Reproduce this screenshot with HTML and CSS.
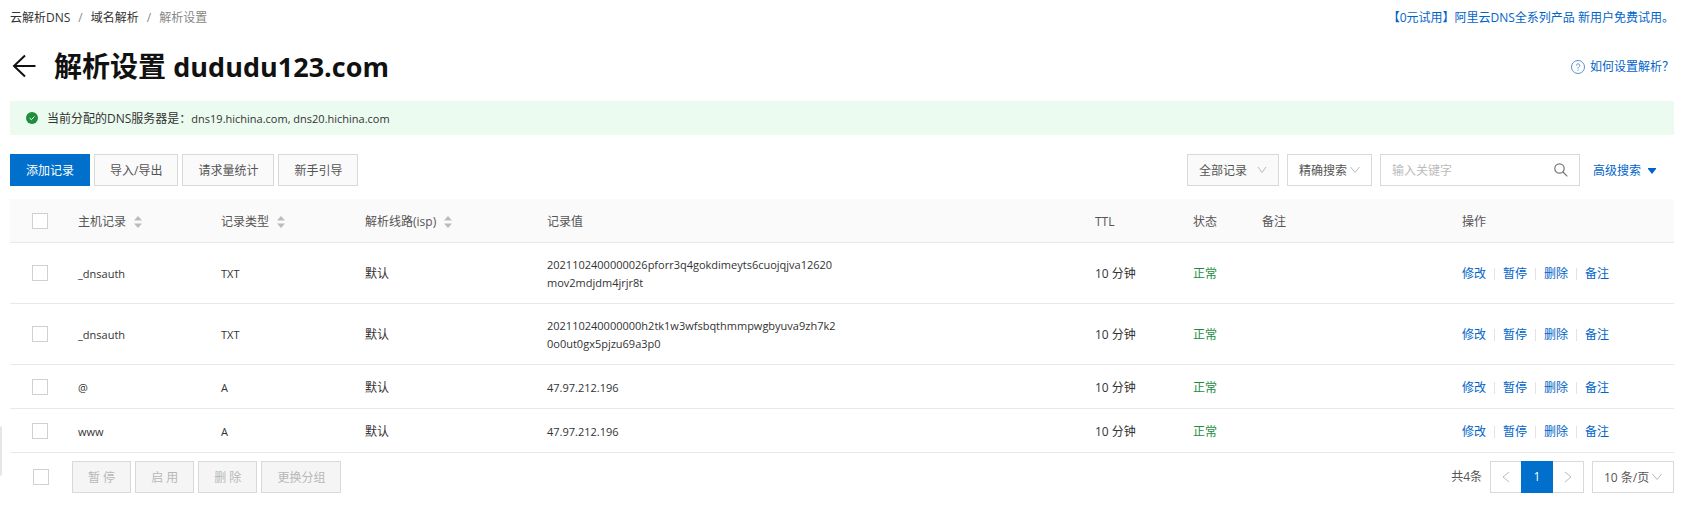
FILE: index.html
```html
<!DOCTYPE html>
<html lang="zh-CN">
<head>
    <meta charset="UTF-8">
    <meta name="viewport" content="width=device-width, initial-scale=1.0">
    <title>解析设置 dududu123.com</title>
    <link rel="stylesheet" href="styles.css">
</head>
<body>
    <button class="side-handle" type="button" aria-label="展开侧栏"></button>

    <div class="top-bar">
        <nav class="breadcrumb">
            <a href="#">云解析DNS</a>
            <span class="sep">/</span>
            <a href="#">域名解析</a>
            <span class="sep">/</span>
            <span class="current">解析设置</span>
        </nav>
        <a class="promo" href="#">【0元试用】阿里云DNS全系列产品 新用户免费试用。</a>
    </div>

    <header class="page-header">
        <a class="back" href="#" aria-label="返回">
            <svg width="24" height="24" viewBox="0 0 24 24" fill="none" stroke="#111" stroke-width="2"><path d="M23.500 12H2M13 1.500L2 12l11 10.500"/></svg>
        </a>
        <h1>解析设置 <span class="domain">dududu123.com</span></h1>
        <a class="help" href="#">
            <svg width="14" height="14" viewBox="0 0 14 14" fill="none" stroke="#5a8fc9"><circle cx="7" cy="7" r="6.500"/><path d="M5.300 5.600c0-2.300 3.500-2.300 3.500-.1C8.800 6.900 7 6.900 7 8.500M7 9.600v1.200"/></svg>
            如何设置解析？
        </a>
    </header>

    <div class="alert">
        <svg width="12" height="12" viewBox="0 0 12 12"><circle cx="6" cy="6" r="6" fill="#1e8e3e"/><path d="M3.600 6l1.800 1.700 3-3.200" fill="none" stroke="#fff"/></svg>
        <p>当前分配的DNS服务器是：<span class="latin">dns19.hichina.com, dns20.hichina.com</span></p>
    </div>

    <div class="toolbar">
        <button class="btn primary" type="button">添加记录</button>
        <button class="btn" type="button">导入/导出</button>
        <button class="btn" type="button">请求量统计</button>
        <button class="btn" type="button">新手引导</button>
        <div class="filters">
            <div class="select filter-type">
                <select aria-label="记录范围"><option>全部记录</option></select>
                <svg width="10" height="8" viewBox="0 0 10 8"><path d="M1 1l4 5.500L9 1"/></svg>
            </div>
            <div class="select filter-match">
                <select aria-label="搜索方式"><option>精确搜索</option></select>
                <svg width="10" height="8" viewBox="0 0 10 8"><path d="M.500 1L5 6.500 9.500 1"/></svg>
            </div>
            <div class="search">
                <input type="text" placeholder="输入关键字" aria-label="输入关键字">
                <button type="button" aria-label="搜索">
                    <svg width="14" height="14" viewBox="0 0 14 14" fill="none" stroke="#777" stroke-width="1.200"><circle cx="5.500" cy="5.500" r="4.700"/><path d="M9 9l4.300 4.300"/></svg>
                </button>
            </div>
            <a class="advanced" href="#">高级搜索
                <svg width="8" height="6" viewBox="0 0 8 6"><path d="M0 0h8v1L4 6 0 1z" fill="#0064c8"/></svg>
            </a>
        </div>
    </div>

    <table class="records">
        <colgroup>
            <col class="c-check">
            <col class="c-host">
            <col class="c-type">
            <col class="c-line">
            <col class="c-value">
            <col class="c-ttl">
            <col class="c-status">
            <col class="c-remark">
            <col class="c-actions">
        </colgroup>
        <thead>
            <tr>
                <th class="check"><input type="checkbox" aria-label="全选"></th>
                <th>主机记录 <svg class="sort" width="8" height="12" viewBox="0 0 8 12"><path d="M4 0l4 4.500H0zM4 12l4-4.500H0z"/></svg></th>
                <th>记录类型 <svg class="sort" width="8" height="12" viewBox="0 0 8 12"><path d="M4 0l4 4.500H0zM4 12l4-4.500H0z"/></svg></th>
                <th>解析线路(isp) <svg class="sort" width="8" height="12" viewBox="0 0 8 12"><path d="M4 0l4 4.500H0zM4 12l4-4.500H0z"/></svg></th>
                <th>记录值</th>
                <th>TTL</th>
                <th>状态</th>
                <th>备注</th>
                <th>操作</th>
            </tr>
        </thead>
        <tbody>
            <tr>
                <td class="check"><input type="checkbox" aria-label="选择 _dnsauth"></td>
                <td class="latin">_dnsauth</td>
                <td class="latin">TXT</td>
                <td>默认</td>
                <td class="latin"><div class="value">2021102400000026pforr3q4gokdimeyts6cuojqjva12620<wbr>mov2mdjdm4jrjr8t</div></td>
                <td>10 分钟</td>
                <td class="ok">正常</td>
                <td></td>
                <td><div class="actions"><a href="#">修改</a><a href="#">暂停</a><a href="#">删除</a><a href="#">备注</a></div></td>
            </tr>
            <tr>
                <td class="check"><input type="checkbox" aria-label="选择 _dnsauth"></td>
                <td class="latin">_dnsauth</td>
                <td class="latin">TXT</td>
                <td>默认</td>
                <td class="latin"><div class="value">202110240000000h2tk1w3wfsbqthmmpwgbyuva9zh7k2<wbr>0o0ut0gx5pjzu69a3p0</div></td>
                <td>10 分钟</td>
                <td class="ok">正常</td>
                <td></td>
                <td><div class="actions"><a href="#">修改</a><a href="#">暂停</a><a href="#">删除</a><a href="#">备注</a></div></td>
            </tr>
            <tr>
                <td class="check"><input type="checkbox" aria-label="选择 @"></td>
                <td class="latin">@</td>
                <td class="latin">A</td>
                <td>默认</td>
                <td class="latin"><div class="value">47.97.212.196</div></td>
                <td>10 分钟</td>
                <td class="ok">正常</td>
                <td></td>
                <td><div class="actions"><a href="#">修改</a><a href="#">暂停</a><a href="#">删除</a><a href="#">备注</a></div></td>
            </tr>
            <tr>
                <td class="check"><input type="checkbox" aria-label="选择 www"></td>
                <td class="latin">www</td>
                <td class="latin">A</td>
                <td>默认</td>
                <td class="latin"><div class="value">47.97.212.196</div></td>
                <td>10 分钟</td>
                <td class="ok">正常</td>
                <td></td>
                <td><div class="actions"><a href="#">修改</a><a href="#">暂停</a><a href="#">删除</a><a href="#">备注</a></div></td>
            </tr>
        </tbody>
    </table>

    <footer class="table-footer">
        <input type="checkbox" aria-label="全选">
        <button class="btn" type="button" disabled>暂 停</button>
        <button class="btn" type="button" disabled>启 用</button>
        <button class="btn" type="button" disabled>删 除</button>
        <button class="btn" type="button" disabled>更换分组</button>
        <div class="pagination">
            <span class="total">共4条</span>
            <div class="pages">
                <button type="button" aria-label="上一页"><svg width="8" height="12" viewBox="0 0 8 12"><path d="M7 1L1 6l6 5"/></svg></button>
                <button class="active" type="button">1</button>
                <button type="button" aria-label="下一页"><svg width="8" height="12" viewBox="0 0 8 12"><path d="M1 1l6 5-6 5"/></svg></button>
            </div>
            <div class="select page-size">
                <select aria-label="每页条数"><option>10 条/页</option></select>
                <svg width="10" height="8" viewBox="0 0 10 8"><path d="M.500 1L5 6.500 9.500 1"/></svg>
            </div>
        </div>
    </footer>
</body>
</html>
```

FILE: styles.css
```css
* {
    box-sizing: border-box;
}
body {
    margin: 0;
    padding: 9px 9px 0 10px;
    font-family: "Open Sans", "Noto Sans CJK SC", sans-serif;
    font-size: 12px;
    line-height: 18px;
    color: #333;
    background-color: #fff;
}
a {
    color: #0064c8;
    text-decoration: none;
}
button, input, select {
    font: inherit;
    color: inherit;
    margin: 0;
}
svg {
    display: block;
    flex: none;
}
.latin {
    font-size: 11px;
}
.side-handle {
    position: absolute;
    left: 0;
    top: 426px;
    width: 2px;
    height: 50px;
    padding: 0;
    border: 0;
    border-radius: 0 2px 2px 0;
    background-color: #e6e6e6;
}

/* top */
.top-bar {
    display: flex;
    justify-content: space-between;
    height: 20px;
}
.breadcrumb {
    display: flex;
    gap: 8px;
}
.breadcrumb a {
    color: #333;
}
.breadcrumb .sep, .breadcrumb .current {
    color: #888;
}
.page-header {
    display: flex;
    align-items: center;
    height: 40px;
    margin-top: 17px;
}
h1 {
    margin: 0 0 0 18px;
    font-size: 28px;
    line-height: 40px;
    font-weight: bold;
    color: #111;
}
.domain {
    font-size: 27px;
}
.back {
    padding-left: 2px;
}
.help {
    display: flex;
    align-items: center;
    gap: 5px;
    margin-left: auto;
    padding-top: 2px;
}
.alert {
    display: flex;
    align-items: center;
    gap: 9px;
    height: 34px;
    margin-top: 15px;
    padding: 0 16px;
    background-color: #ebfbf0;
}
.alert p {
    margin: 0;
    padding-top: 2px;
}

/* toolbar */
.toolbar {
    display: flex;
    gap: 4px;
    margin-top: 19px;
}
.btn {
    height: 32px;
    padding: 2px 15px 0;
    border: 1px solid #d9d9d9;
    background-color: #fafafa;
    color: #555;
}
.btn.primary {
    border-color: #0070cc;
    background-color: #0070cc;
    color: #fff;
}
.btn:disabled {
    background-color: #f5f5f5;
    color: #b8b8b8;
}
.filters {
    display: flex;
    gap: 8px;
    margin-left: auto;
}
.select {
    position: relative;
    height: 32px;
    color: #555;
}
.select select {
    appearance: none;
    width: 100%;
    height: 100%;
    padding: 2px 11px 0;
    border: 1px solid #d9d9d9;
    border-radius: 0;
    background-color: #fff;
}
.select svg {
    position: absolute;
    right: 12px;
    top: 12px;
    fill: none;
    stroke: #bbb;
    pointer-events: none;
}
.filter-type {
    width: 92px;
}
.filter-type select {
    background-color: #fafafa;
}
.filter-match {
    width: 85px;
}
.search {
    display: flex;
    width: 200px;
    height: 32px;
    border: 1px solid #d9d9d9;
}
.search input {
    flex: 1;
    min-width: 0;
    padding: 2px 11px 0;
    border: 0;
    outline: 0;
}
.search input::placeholder {
    color: #bbb;
}
.search button {
    padding: 0 11px;
    border: 0;
    background: none;
}
.advanced {
    display: flex;
    align-items: center;
    gap: 7px;
    padding: 2px 18px 0 5px;
}

/* records table */
.records {
    width: 100%;
    margin-top: 13px;
    border-collapse: separate;
    border-spacing: 0;
    table-layout: fixed;
}
.c-check { width: 52px; }
.c-host { width: 143px; }
.c-type { width: 144px; }
.c-line { width: 182px; }
.c-ttl { width: 98px; }
.c-status { width: 69px; }
.c-remark { width: 200px; }
.c-actions { width: 228px; }
.records th, .records td {
    height: 44px;
    padding: 13px 16px 11px;
    border-bottom: 1px solid #e8e8e8;
    text-align: left;
    vertical-align: middle;
}
.records th {
    background-color: #fafafa;
    font-weight: normal;
    color: #555;
}
.records .check {
    padding: 0 0 0 22px;
}
.records .value {
    max-width: 300px;
}
.records .ok {
    color: #1e8e3e;
}
.sort {
    display: inline-block;
    margin-left: 5px;
    vertical-align: -2px;
    fill: #bbb;
}
input[type="checkbox"] {
    appearance: none;
    display: block;
    width: 16px;
    height: 16px;
    border: 1px solid #d0d0d0;
    background-color: #fff;
}
.actions {
    display: flex;
}
.actions a + a {
    margin-left: 8px;
    padding-left: 9px;
    background: linear-gradient(#e3e3e3, #e3e3e3) left center / 1px 12px no-repeat;
}

/* footer */
.table-footer {
    display: flex;
    align-items: center;
    gap: 4px;
    margin-top: 8px;
}
.table-footer > input {
    margin: 0 19px 0 23px;
}
.pagination {
    display: flex;
    align-items: center;
    gap: 8px;
    margin-left: auto;
    color: #555;
}
.pages {
    display: flex;
    height: 32px;
    border: 1px solid #d9d9d9;
}
.pages button {
    display: flex;
    align-items: center;
    justify-content: center;
    width: 30px;
    padding: 0;
    border: 0;
    background-color: #fff;
}
.pages svg {
    fill: none;
    stroke: #bbb;
}
.pages .active {
    width: 32px;
    margin: -1px 0;
    background-color: #0070cc;
    color: #fff;
}
.page-size {
    width: 82px;
}
```
